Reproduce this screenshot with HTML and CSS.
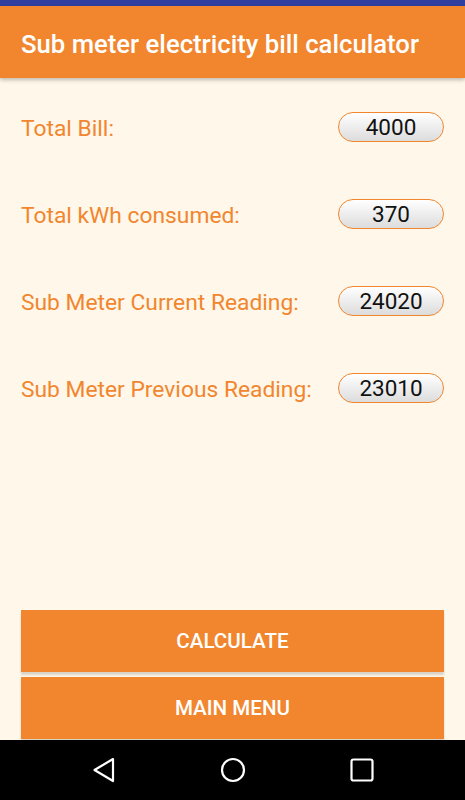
FILE: index.html
```html
<!DOCTYPE html>
<html lang="en">

<head>
    <meta charset="UTF-8">
    <meta name="viewport" content="width=device-width, initial-scale=1.0">
    <title>Sub meter electricity bill calculator</title>
    <link rel="stylesheet" href="styles.css">
</head>

<body>
    <div class="status-bar"></div>

    <header class="toolbar">
        <h1>Sub meter electricity bill calculator</h1>
    </header>

    <main class="content">
        <div class="fields">
            <div class="row">
                <span class="label">Total Bill:</span>
                <span class="value">4000</span>
            </div>
            <div class="row">
                <span class="label">Total kWh consumed:</span>
                <span class="value">370</span>
            </div>
            <div class="row">
                <span class="label">Sub Meter Current Reading:</span>
                <span class="value">24020</span>
            </div>
            <div class="row">
                <span class="label">Sub Meter Previous Reading:</span>
                <span class="value">23010</span>
            </div>
        </div>

        <div class="actions">
            <button type="button" class="button">CALCULATE</button>
            <button type="button" class="button">MAIN MENU</button>
        </div>
    </main>

    <nav class="nav-bar">
        <svg width="24" height="26" viewBox="0 0 24 26">
            <path d="M21 2 L2.5 13 L21 24 Z" fill="none" stroke="#fff" stroke-width="2.2" stroke-linejoin="round" />
        </svg>
        <svg width="26" height="26" viewBox="0 0 26 26">
            <circle cx="13" cy="13" r="11" fill="none" stroke="#fff" stroke-width="2.2" />
        </svg>
        <svg width="24" height="24" viewBox="0 0 24 24">
            <rect x="1.5" y="1.5" width="21" height="21" rx="2" fill="none" stroke="#fff" stroke-width="2.2" />
        </svg>
    </nav>
</body>

</html>
```

FILE: styles.css
```css
body {
    margin: 0;
    padding: 0;
    height: 800px;
    display: flex;
    flex-direction: column;
    font-family: Roboto, "Liberation Sans", sans-serif;
    background-color: #fff7e9;
    overflow: hidden;
}

.status-bar {
    height: 6px;
    background-color: #303f9f;
}

.toolbar {
    height: 72px;
    display: flex;
    align-items: center;
    padding: 0 21px;
    background-color: #f1862e;
    box-shadow: 0 2px 4px rgba(0, 0, 0, 0.25);
    position: relative;
    z-index: 1;
}

.toolbar h1 {
    margin: 0;
    padding-top: 4px;
    color: white;
    font-size: 25.7px;
    font-weight: 500;
    white-space: nowrap;
}

.content {
    flex: 1;
    display: flex;
    flex-direction: column;
    justify-content: space-between;
    padding: 34px 21px 0;
}

.fields {
    display: flex;
    flex-direction: column;
    gap: 57px;
}

.row {
    height: 30px;
    display: flex;
    align-items: center;
    justify-content: space-between;
}

.label {
    color: #f1862e;
    font-size: 22.8px;
    position: relative;
    top: 1px;
}

.value {
    width: 104px;
    height: 28px;
    line-height: 28px;
    text-align: center;
    border: 1px solid #f1862e;
    border-radius: 15px;
    background: linear-gradient(#ffffff, #dcdcdc);
    color: #111;
    font-size: 22.5px;
}

.actions {
    display: flex;
    flex-direction: column;
    gap: 5px;
    margin-bottom: 1px;
}

.button {
    height: 62px;
    border: none;
    background-color: #f1862e;
    color: white;
    font-family: Roboto, "Liberation Sans", sans-serif;
    font-size: 20.6px;
    font-weight: 500;
    box-shadow: 0 3px 2px rgba(0, 0, 0, 0.15);
    cursor: pointer;
}

.nav-bar {
    height: 60px;
    background-color: #000;
    display: grid;
    grid-template-columns: repeat(3, 129px);
    justify-content: center;
    justify-items: center;
    align-items: center;
}
```
